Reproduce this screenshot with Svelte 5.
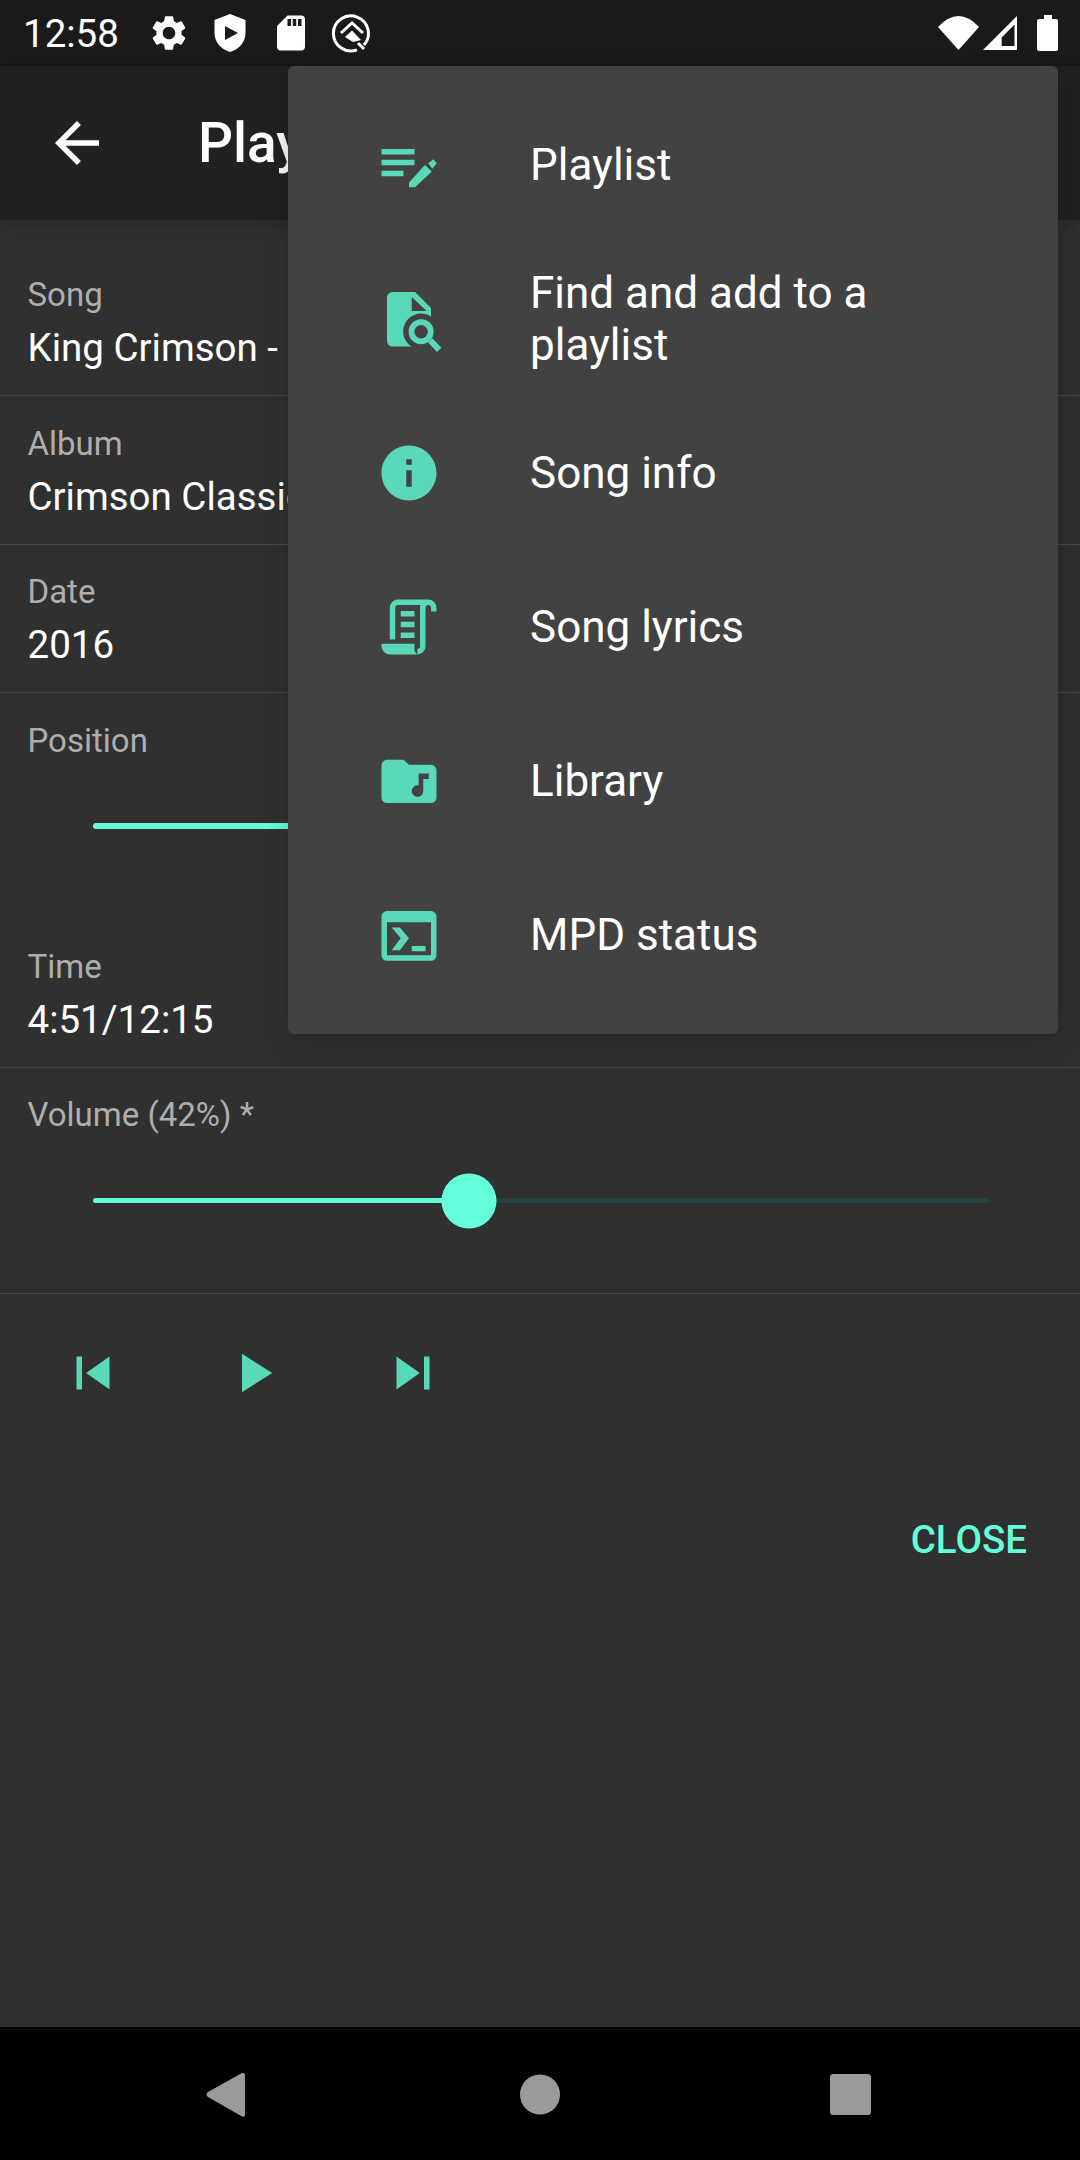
<script>
    const menuItems = [
        { id: "playlist", label: "Playlist" },
        { id: "find", label: "Find and add to a playlist" },
        { id: "info", label: "Song info" },
        { id: "lyrics", label: "Song lyrics" },
        { id: "library", label: "Library" },
        { id: "status", label: "MPD status" }
    ];

    const infoRows = [
        { label: "Song", value: "King Crimson - Starless" },
        { label: "Album", value: "Crimson Classics" },
        { label: "Date", value: "2016" }
    ];

    let position = 39.6;
    let volume = 42;
</script>

<div class="screen">
    <div class="status">
        <span class="clock">12:58</span>
        <div class="status-icons">
            <svg viewBox="0 0 24 24" width="42" height="42"><path d="M19.14 12.94c.04-.3.06-.61.06-.94 0-.32-.02-.64-.07-.94l2.03-1.58c.18-.14.23-.41.12-.61l-1.92-3.32c-.12-.22-.37-.29-.59-.22l-2.39.96c-.5-.38-1.03-.7-1.62-.94l-.36-2.54c-.04-.24-.24-.41-.48-.41h-3.84c-.24 0-.43.17-.47.41l-.36 2.54c-.59.24-1.13.57-1.62.94l-2.39-.96c-.22-.08-.47 0-.59.22L2.74 8.87c-.12.21-.08.47.12.61l2.03 1.58c-.05.3-.09.63-.09.94s.02.64.07.94l-2.03 1.58c-.18.14-.23.41-.12.61l1.92 3.32c.12.22.37.29.59.22l2.39-.96c.5.38 1.03.7 1.62.94l.36 2.54c.05.24.24.41.48.41h3.84c.24 0 .44-.17.47-.41l.36-2.54c.59-.24 1.13-.56 1.62-.94l2.39.96c.22.08.47 0 .59-.22l1.92-3.32c.12-.22.07-.47-.12-.61l-2.01-1.58zM12 15.6c-1.98 0-3.6-1.62-3.6-3.6s1.62-3.6 3.6-3.6 3.6 1.62 3.6 3.6-1.62 3.6-3.6 3.6z" /></svg>
            <svg viewBox="0 0 42 42" width="42" height="42"><path fill-rule="evenodd" d="M21 2 L5.500 8 V21 C5.500 30 12 37.500 21 40 C30 37.500 36.500 30 36.500 21 V8 Z M16 14 L29 21 L16 28 Z" /></svg>
            <svg viewBox="0 0 24 24" width="42" height="42"><path d="M18 2h-8L4 8v12c0 1.100.9 2 2 2h12c1.100 0 2-.9 2-2V4c0-1.100-.9-2-2-2zm-6 6h-2V4h2v4zm3 0h-2V4h2v4zm3 0h-2V4h2v4z" /></svg>
            <svg viewBox="0 0 42 42" width="42" height="42">
                <path d="M33 33 A17.500 17.500 0 1 0 26 37.800" fill="none" stroke="#fff" stroke-width="3" />
                <path d="M10 21 L21 11 L32 21" fill="none" stroke="#fff" stroke-width="3" />
                <path d="M14 25 L21 18.500 L30 28 L22 30 Z" />
                <path d="M27 31 L33 37" fill="none" stroke="#fff" stroke-width="3" />
            </svg>
        </div>
        <div class="system-icons">
            <svg class="wifi" viewBox="0 0 41 34" width="41" height="34"><path d="M20.500 34 L0 11 Q20.500 -11 41 11 Z" /></svg>
            <svg class="signal" viewBox="0 0 34 34" width="34" height="34"><path fill-rule="evenodd" d="M0 34 L34 0 V34 Z M18.700 30 H31.500 V8.500 L18.700 21.500 Z" /></svg>
            <svg class="battery" viewBox="0 0 21 36" width="21" height="36"><path d="M7 0 H15 V4 H19 a2 2 0 0 1 2 2 V34 a2 2 0 0 1-2 2 H2 a2 2 0 0 1-2-2 V6 a2 2 0 0 1 2-2 H7 Z" /></svg>
        </div>
    </div>

    <div class="toolbar">
        <svg class="back" viewBox="0 0 24 24" width="66" height="66"><path d="M20 11H7.830l5.590-5.590L12 4l-8 8 8 8 1.410-1.410L7.830 13H20v-2z" /></svg>
        <span class="title">Playback</span>
    </div>

    <div class="content">
        {#each infoRows as row}
            <div class="row">
                <div class="label">{row.label}</div>
                <div class="value">{row.value}</div>
            </div>
        {/each}

        <div class="row">
            <div class="label">Position</div>
            <div class="slider slider-position">
                <div class="track">
                    <div class="fill" style="width: {position}%"></div>
                    <div class="thumb" style="left: {position}%"></div>
                </div>
            </div>
            <div class="label">Time</div>
            <div class="value">4:51/12:15</div>
        </div>

        <div class="row row-volume">
            <div class="label">Volume ({volume}%) *</div>
            <div class="slider">
                <div class="track">
                    <div class="fill" style="width: {volume}%"></div>
                    <div class="thumb" style="left: {volume}%"></div>
                </div>
            </div>
        </div>

        <div class="controls">
            <svg viewBox="0 0 24 24" width="66" height="66"><path d="M6 6h2v12H6zm3.500 6l8.500 6V6z" /></svg>
            <svg viewBox="0 0 24 24" width="66" height="66"><path d="M8 5v14l11-7z" /></svg>
            <svg viewBox="0 0 24 24" width="66" height="66"><path d="M6 18l8.500-6L6 6v12zM16 6v12h2V6h-2z" /></svg>
        </div>

        <div class="actions">
            <span class="close">CLOSE</span>
        </div>
    </div>

    <div class="nav">
        <svg viewBox="0 0 66 66" width="66" height="66"><path d="M12 31 L46 12 Q49 11.500 49 14 V53.500 Q49 56.500 46 55.500 L12 36 Q9 33.500 12 31 Z" /></svg>
        <svg viewBox="0 0 66 66" width="66" height="66"><circle cx="33" cy="33.500" r="20" /></svg>
        <svg viewBox="0 0 66 66" width="66" height="66"><rect x="12" y="13" width="41" height="41" rx="3" /></svg>
    </div>

    <div class="menu">
        {#each menuItems as item}
            <div class="menu-item">
                <svg class="menu-icon" viewBox="0 0 24 24" width="66" height="66">
                    {#if item.id === "playlist"}
                        <path d="M2 6.200h12v2H2zM2 10.100h12v2H2zM2 14.100h8v2H2z" />
                        <path d="M12 20.100v-1.700l5.800-6.400 2.500 2.400-6.100 5.700zM19 11.400l1.900-1.500 1.200 1.500-1.600 2z" />
                    {:else if item.id === "find"}
                        <path fill-rule="evenodd" d="M6 2.200h8.200l5.800 5.800v3.200c-1-.8-2.300-1.200-3.600-1.200-3.600 0-6.500 2.900-6.500 6.500 0 2.200 1.100 4.200 3 5.500H6a2 2 0 0 1-2-2V4.200a2 2 0 0 1 2-2zM13 4v5.100h5.400z" />
                        <circle cx="16.400" cy="16.600" r="3.500" fill="none" stroke="currentColor" stroke-width="2.100" />
                        <path d="M19.700 19.800L23 23.200" fill="none" stroke="currentColor" stroke-width="2.200" />
                    {:else if item.id === "info"}
                        <path d="M12 2C6.480 2 2 6.480 2 12s4.480 10 10 10 10-4.480 10-10S17.520 2 12 2zm1 15h-2v-6h2v6zm0-8h-2V7h2v2z" />
                    {:else if item.id === "lyrics"}
                        <path d="M6 16.500V5a2 2 0 0 1 2-2h11a2 2 0 0 1 2 2v1.400M19 3a2 2 0 0 0-2 2v14a2 2 0 0 1-2 2" fill="none" stroke="currentColor" stroke-width="2" />
                        <path d="M9 6.200h5v2H9zM9 10.100h5v2H9zM9 14h5v2H9z" />
                        <path d="M2 18.100h12v1.100a2.800 2.800 0 0 0 1 2.800H5a3 3 0 0 1-3-3z" />
                    {:else if item.id === "library"}
                        <path fill-rule="evenodd" d="M4 4.300h6l2 1.800h8a2 2 0 0 1 2 2V18a2 2 0 0 1-2 2H4a2 2 0 0 1-2-2V6.300a2 2 0 0 1 2-2zM15.500 9.300v4.300a2.100 2.100 0 1 0 1.700 2V11.300h2v-2z" />
                    {:else}
                        <path fill-rule="evenodd" d="M4 3.300h16a2 2 0 0 1 2 2v14.100a2 2 0 0 1-2 2H4a2 2 0 0 1-2-2V5.300a2 2 0 0 1 2-2zM4 7.400v12h16v-12z" />
                        <path d="M5.700 9.300h3l3.300 3.900-3.300 4.300h-3l3.300-4.300zM13 16h5v1.900h-5z" />
                    {/if}
                </svg>
                <span class="menu-label">{item.label}</span>
            </div>
        {/each}
    </div>
</div>

<style>
    :global(body) {
        margin: 0;
        background: #000;
    }

    .screen {
        position: relative;
        display: flex;
        flex-direction: column;
        width: 1080px;
        height: 2160px;
        overflow: hidden;
        background: #303030;
        color: #fff;
        font-family: Roboto, "Noto Sans", sans-serif;
    }

    svg {
        display: block;
        flex: none;
        fill: currentColor;
    }

    .status {
        display: flex;
        align-items: center;
        flex: none;
        height: 66px;
        padding: 0 22px 0 23px;
        box-sizing: border-box;
        background: #1a1a1a;
    }

    .clock {
        width: 124.500px;
        font-size: 38.500px;
    }

    .status-icons {
        display: flex;
        gap: 19px;
    }

    .system-icons {
        display: flex;
        align-items: center;
        margin-left: auto;
    }

    .signal {
        margin-left: 4px;
    }

    .battery {
        margin-left: 20px;
    }

    .toolbar {
        position: relative;
        z-index: 1;
        display: flex;
        align-items: center;
        flex: none;
        height: 154px;
        padding-left: 44px;
        box-sizing: border-box;
        background: #212121;
        box-shadow: 0 4px 14px rgba(0, 0, 0, 0.2);
    }

    .title {
        margin-left: 88px;
        font-size: 55px;
        font-weight: 500;
    }

    .content {
        flex: 1;
        padding-top: 27.500px;
    }

    .row {
        padding: 24.500px 27.500px 21px;
        border-bottom: 1px solid #484848;
    }

    .row-volume {
        padding-bottom: 29.500px;
    }

    .label {
        font-size: 33px;
        line-height: 46px;
        color: #aeaeae;
    }

    .value {
        margin-top: 4px;
        font-size: 38.500px;
        line-height: 52px;
        white-space: nowrap;
    }

    .slider {
        display: flex;
        align-items: center;
        height: 125px;
        padding: 0 63.500px 0 65.500px;
    }

    .slider-position {
        margin-bottom: 55px;
    }

    .track {
        position: relative;
        flex: 1;
        height: 5.500px;
        border-radius: 3px;
        background: #25443f;
    }

    .fill {
        height: 100%;
        border-radius: 3px;
        background: #64ffda;
    }

    .thumb {
        position: absolute;
        top: 50%;
        width: 55px;
        height: 55px;
        border-radius: 50%;
        background: #64ffda;
        transform: translate(-50%, -50%);
    }

    .controls {
        display: flex;
        gap: 94px;
        padding: 46px 0 0 60px;
        color: #5ad8ba;
    }

    .actions {
        display: flex;
        justify-content: flex-end;
        margin-top: 111px;
        padding-right: 53px;
    }

    .close {
        font-size: 38.500px;
        line-height: 45px;
        font-weight: 500;
        color: #64ffda;
    }

    .nav {
        display: flex;
        justify-content: center;
        align-items: center;
        gap: 245px;
        flex: none;
        height: 133px;
        background: #000;
        color: #9a9a9a;
    }

    .menu {
        position: absolute;
        z-index: 2;
        top: 66px;
        left: 288px;
        width: 770px;
        padding: 22px 0;
        box-sizing: border-box;
        border-radius: 6px;
        background: #424242;
        box-shadow: 0 8px 28px rgba(0, 0, 0, 0.22);
    }

    .menu-item {
        display: flex;
        align-items: center;
        height: 154px;
        padding: 0 60px 0 88px;
    }

    .menu-icon {
        color: #5ad8ba;
    }

    .menu-label {
        margin-left: 88px;
        font-size: 44px;
        line-height: 52px;
    }
</style>
